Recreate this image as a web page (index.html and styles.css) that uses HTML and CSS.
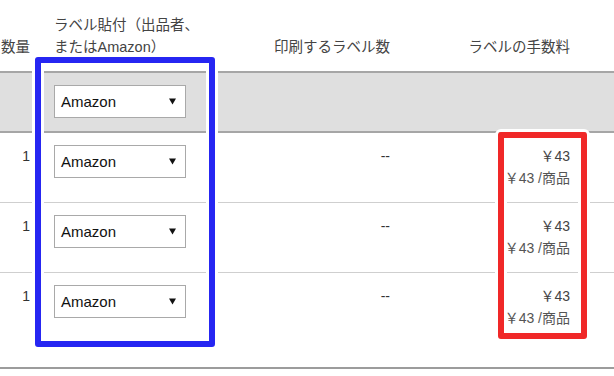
FILE: index.html
```html
<!DOCTYPE html>
<html lang="ja">
<head>
  <meta charset="UTF-8">
  <meta name="viewport" content="width=device-width, initial-scale=1.0">
  <title>ラベル貼付</title>
  <link rel="stylesheet" href="styles.css">
</head>
<body>
  <div class="sheet">
    <table class="labels">
      <colgroup>
        <col class="c-qty"><col class="c-owner"><col class="c-print"><col class="c-fee">
      </colgroup>
      <thead>
        <tr>
          <th class="num">数量</th>
          <th>ラベル貼付（出品者、<br>またはAmazon）</th>
          <th class="num">印刷するラベル数</th>
          <th class="num">ラベルの手数料</th>
        </tr>
      </thead>
      <tbody>
        <tr class="bulk">
          <td></td>
          <td><div class="select"><span>Amazon</span><svg viewBox="0 0 8 7"><path d="M0 0h8L4 7z"/></svg></div></td>
          <td></td>
          <td></td>
        </tr>
        <tr>
          <td class="num">1</td>
          <td><div class="select"><span>Amazon</span><svg viewBox="0 0 8 7"><path d="M0 0h8L4 7z"/></svg></div></td>
          <td class="num">--</td>
          <td class="num fee"><div>￥43</div><div class="unit">￥43 /商品</div></td>
        </tr>
        <tr>
          <td class="num">1</td>
          <td><div class="select"><span>Amazon</span><svg viewBox="0 0 8 7"><path d="M0 0h8L4 7z"/></svg></div></td>
          <td class="num">--</td>
          <td class="num fee"><div>￥43</div><div class="unit">￥43 /商品</div></td>
        </tr>
        <tr>
          <td class="num">1</td>
          <td><div class="select"><span>Amazon</span><svg viewBox="0 0 8 7"><path d="M0 0h8L4 7z"/></svg></div></td>
          <td class="num">--</td>
          <td class="num fee"><div>￥43</div><div class="unit">￥43 /商品</div></td>
        </tr>
      </tbody>
    </table>
    <div class="mark mark-blue"></div>
    <div class="mark mark-red"></div>
  </div>
</body>
</html>
```

FILE: styles.css
```css
body { margin:0; background:#fff; color:#333;
       font-family:"Liberation Sans", "Noto Sans CJK JP", sans-serif; font-size:14px; }
.sheet { position:relative; width:614px; padding-bottom:25px; border-bottom:2px solid #9c9c9c; }

.labels { width:100%; border-collapse:collapse; table-layout:fixed; }
.c-qty { width:40px; }
.c-owner { width:200px; }
.c-print { width:164px; }
.c-fee { width:210px; }

th { font-weight:normal; text-align:left; vertical-align:bottom; line-height:22px; color:#444;
     font-size:14.5px; padding:14px 14px 13px; border-bottom:2px solid #a6a6a6; white-space:nowrap; }
td { vertical-align:top; line-height:22px; padding:12px 14px 13px; border-bottom:1px solid #cfcfcf; }
tbody tr:last-child td { border-bottom:none; }
.num { text-align:right; }
th:first-child, td:first-child { padding-left:0; padding-right:10px; }
th:last-child, td:last-child { padding-right:44px; }

.bulk td { background:#dfdfdf; padding:12px 14px 13px; border-bottom:2px solid #a6a6a6; }

.select { display:flex; align-items:center; justify-content:space-between; box-sizing:border-box;
          width:132px; height:33px; padding:0 9px 0 6px; background:#fff; border:1px solid #a9a9a9;
          color:#111; font-size:15px; }
.select svg { width:7px; height:7px; fill:#111; }

.fee { color:#444; }
.fee .unit { color:#555; }

.mark { position:absolute; box-sizing:border-box; border:6px solid; border-radius:3px;
        box-shadow:0 0 0 3px #fff, inset 0 0 0 3px #fff; }
.mark-blue { left:35px; top:57px; width:180px; height:290px; border-color:#2626f2; }
.mark-red { left:498px; top:132px; width:89px; height:207px; border-color:#f02828; }
```
